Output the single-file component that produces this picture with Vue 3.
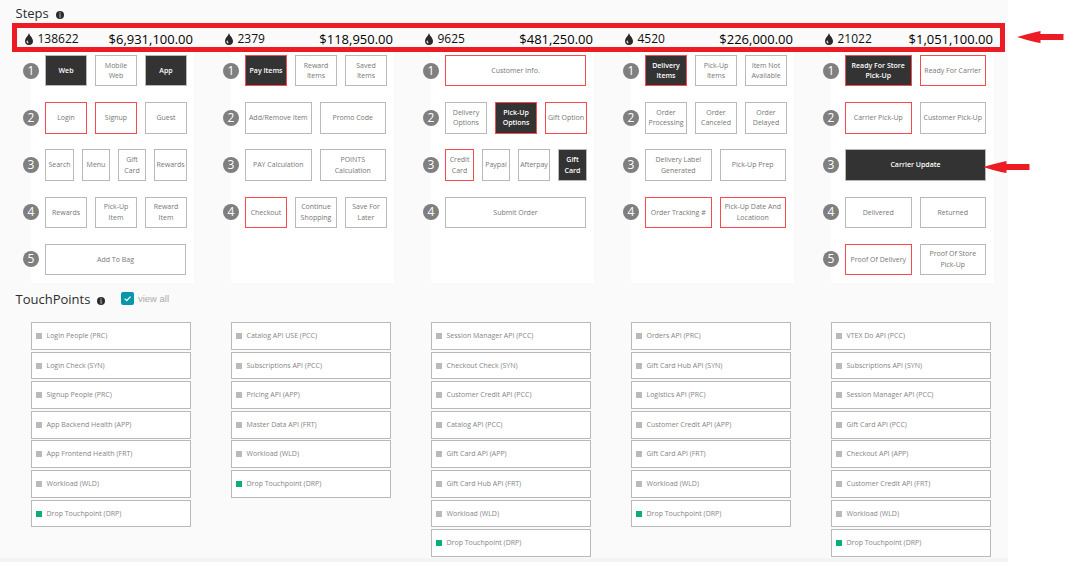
<script setup>
// state: '' plain, 'a' active (dark), 'r' red outline, 'ar' both
const columns = [
  {
    count: '138622',
    amount: '$6,931,100.00',
    rows: [
      [['Web', 'a'], ['Mobile\nWeb'], ['App', 'a']],
      [['Login', 'r'], ['Signup', 'r'], ['Guest']],
      [['Search', '', 29], ['Menu', '', 28], ['Gift Card', '', 28], ['Rewards', '', 33]],
      [['Rewards'], ['Pick-Up Item'], ['Reward Item']],
      [['Add To Bag']],
    ],
    points: ['Login People (PRC)', 'Login Check (SYN)', 'Signup People (PRC)', 'App Backend Health (APP)', 'App Frontend Health (FRT)', 'Workload (WLD)', 'Drop Touchpoint (DRP)'],
  },
  {
    count: '2379',
    amount: '$118,950.00',
    rows: [
      [['Pay Items', 'ar'], ['Reward Items'], ['Saved\nItems']],
      [['Add/Remove Item'], ['Promo Code']],
      [['PAY Calculation'], ['POINTS\nCalculation']],
      [['Checkout', 'r'], ['Continue Shopping'], ['Save For Later']],
    ],
    points: ['Catalog API USE (PCC)', 'Subscriptions API (PCC)', 'Pricing API (APP)', 'Master Data API (FRT)', 'Workload (WLD)', 'Drop Touchpoint (DRP)'],
  },
  {
    count: '9625',
    amount: '$481,250.00',
    rows: [
      [['Customer Info.', 'r']],
      [['Delivery Options'], ['Pick-Up Options', 'ar'], ['Gift Option', 'r']],
      [['Credit Card', 'r', 29], ['Paypal', '', 28], ['Afterpay', '', 32], ['Gift Card', 'a', 29]],
      [['Submit Order']],
    ],
    points: ['Session Manager API (PCC)', 'Checkout Check (SYN)', 'Customer Credit API (PCC)', 'Catalog API (PCC)', 'Gift Card API (APP)', 'Gift Card Hub API (FRT)', 'Workload (WLD)', 'Drop Touchpoint (DRP)'],
  },
  {
    count: '4520',
    amount: '$226,000.00',
    rows: [
      [['Delivery Items', 'ar'], ['Pick-Up Items'], ['Item Not Available']],
      [['Order Processing'], ['Order Canceled'], ['Order Delayed']],
      [['Delivery Label Generated'], ['Pick-Up Prep']],
      [['Order Tracking #', 'r'], ['Pick-Up Date And Locatioon', 'r']],
    ],
    points: ['Orders API (PRC)', 'Gift Card Hub API (SYN)', 'Logistics API (PRC)', 'Customer Credit API (APP)', 'Gift Card API (FRT)', 'Workload (WLD)', 'Drop Touchpoint (DRP)'],
  },
  {
    count: '21022',
    amount: '$1,051,100.00',
    rows: [
      [['Ready For Store Pick-Up', 'ar'], ['Ready For Carrier', 'r']],
      [['Carrier Pick-Up', 'r'], ['Customer Pick-Up']],
      [['Carrier Update', 'a']],
      [['Delivered'], ['Returned']],
      [['Proof Of Delivery', 'r'], ['Proof Of Store\nPick-Up']],
    ],
    points: ['VTEX Do API (PCC)', 'Subscriptions API (SYN)', 'Session Manager API (PCC)', 'Gift Card API (PCC)', 'Checkout API (APP)', 'Customer Credit API (FRT)', 'Workload (WLD)', 'Drop Touchpoint (DRP)'],
  },
]
</script>

<template>
  <div class="stage">
    <main class="page">
      <header class="heading">
        <h2>Steps</h2>
        <svg class="info" viewBox="0 0 8 8"><circle cx="4" cy="4" r="4" fill="#2b2b2b" /><path d="M3.300 1.300h1.400v1.200h-1.400zM3 3.200h1.700v2.700h.6v.7h-2.300v-.7h.5v-2h-.5z" fill="#a5a5a5" /></svg>
      </header>

      <section class="columns totals">
        <div v-for="c in columns" :key="c.count" class="total">
          <svg class="drop" viewBox="0 0 8 12"><path d="M4 0C4.500 2.600 8 5 8 8.100A4 3.900 0 0 1 0 8.100C0 5 3.500 2.600 4 0Z" fill="#292929" /><path d="M1.500 7.900C1.300 9.300 2.200 10.300 3.500 10.200C3.900 9.300 2.700 9 2.600 7.300Z" fill="#d4d4d4" /></svg>
          <span class="count">{{ c.count }}</span>
          <span class="amount">{{ c.amount }}</span>
        </div>
      </section>

      <section class="columns steps">
        <div v-for="c in columns" :key="c.count" class="panel">
          <div v-for="(row, i) in c.rows" :key="i" class="row">
            <span class="num">{{ i + 1 }}</span>
            <div class="cells" :class="{ many: row.length > 2 }">
              <div
                v-for="[label, state = '', width] in row"
                :key="label"
                class="cell"
                :class="{ active: state.includes('a'), alert: state.includes('r') }"
                :style="width ? { flex: `0 0 ${width}px` } : null"
              ><span>{{ label }}</span></div>
            </div>
          </div>
        </div>
      </section>

      <header class="heading touch">
        <h2>TouchPoints</h2>
        <svg class="info" viewBox="0 0 8 8"><circle cx="4" cy="4" r="4" fill="#2b2b2b" /><path d="M3.300 1.300h1.400v1.200h-1.400zM3 3.200h1.700v2.700h.6v.7h-2.300v-.7h.5v-2h-.5z" fill="#a5a5a5" /></svg>
        <svg class="check" viewBox="0 0 13 13"><rect width="13" height="13" rx="2" fill="#0797a8" /><path d="M3.700 6.600l2 2 3.800-4" fill="none" stroke="#fff" stroke-width="1.300" /></svg>
        <span class="viewall">view all</span>
      </header>

      <section class="columns lists">
        <ul v-for="c in columns" :key="c.count" class="list">
          <li v-for="p in c.points" :key="p"><i :class="{ green: p.startsWith('Drop') }"></i><span>{{ p }}</span></li>
        </ul>
      </section>
    </main>

    <div class="frame"></div>
    <svg class="arrow arrow-top" viewBox="0 0 47 12"><path d="M0 6L10 3.300 19 1 23.500 0V3H46.500V9H23.500V12L19 11.200 10 9Z" fill="#ed1c24" /></svg>
    <svg class="arrow arrow-low" viewBox="0 0 47 12"><path d="M0 6L10 3.300 19 1 23.500 0V3H46.500V9H23.500V12L19 11.200 10 9Z" fill="#ed1c24" /></svg>
  </div>
</template>

<style>
body { background: #fff; }
</style>

<style scoped>
.stage {
  position: relative;
  width: 1081px;
  height: 568px;
  overflow: hidden;
  font-family: "Open Sans", sans-serif;
}
.page {
  box-sizing: border-box;
  width: 1008px;
  height: 562px;
  background: #fafafa;
  border-bottom: 4px solid #f4f4f4;
}
.heading {
  box-sizing: border-box;
  display: flex;
  align-items: center;
  height: 27px;
  padding: 0 0 2px 15.500px;
}
h2 {
  margin: 0;
  font-size: 13px;
  line-height: 18px;
  font-weight: 400;
  color: #2d2d2d;
}
.info { width: 8px; height: 8px; margin: 5px 0 0 7.500px; }
.columns {
  display: grid;
  grid-template-columns: repeat(5, 200px);
}
.totals { height: 25px; width: 1008px; }
.total {
  display: flex;
  align-items: center;
  width: 168px;
  height: 23px;
  padding-left: 25px;
  color: #111;
  line-height: 18px;
}
.drop { width: 8px; height: 12px; margin-top: 1px; }
.count { margin-left: 4.500px; font-size: 12px; }
.amount { margin-left: auto; font-size: 13px; color: #000; }
.steps { height: 231px; padding-left: 31px; width: 977px; }
.panel {
  box-sizing: border-box;
  width: 163px;
  height: 231px;
  padding-top: 3px;
  background: #fff;
}
.row {
  display: flex;
  align-items: center;
  height: 31.400px;
  margin: 0 0 15.800px -8px;
}
.num {
  flex: none;
  width: 16px;
  height: 16px;
  border-radius: 50%;
  background: #7f7f7f;
  color: #fff;
  font-size: 12px;
  line-height: 16px;
  text-align: center;
}
.cells {
  display: flex;
  gap: 8px;
  width: 141px;
  height: 100%;
  margin-left: 6px;
}
.cells.many { width: 142px; }
.cell {
  box-sizing: border-box;
  display: flex;
  flex: 1 1 0;
  min-width: 0;
  align-items: center;
  justify-content: center;
  padding-top: 1px;
  border: 1px solid #b9b9b9;
  background: #fff;
  color: #777;
  font-size: 7px;
  line-height: 10.500px;
  text-align: center;
  white-space: pre-line;
}
.cell.active { background: #333; color: #fff; font-weight: 600; }
.cell.alert { border-color: #f8494d; }
.touch { height: 36px; padding-bottom: 4px; }
.touch .info { margin-left: 7px; margin-top: 3px; }
.check { width: 13px; height: 13px; margin: -1px 0 0 15.500px; }
.viewall {
  margin: -2px 0 0 4px;
  font: 9.500px "Liberation Sans", sans-serif;
  color: #aaa;
}
.lists { padding: 3.100px 0 0 31px; }
.list { width: 160px; margin: 0; padding: 0; list-style: none; }
.list li {
  box-sizing: border-box;
  display: flex;
  align-items: center;
  height: 27.800px;
  margin-bottom: 1.800px;
  padding-left: 4px;
  border: 1px solid #b9b9b9;
  background: #fff;
  color: #858585;
  font-size: 7px;
  line-height: 10px;
}
.list i { width: 6px; height: 6px; margin-right: 4.500px; background: #bababa; }
.list i.green { background: #0cae75; }
.frame {
  position: absolute;
  box-sizing: border-box;
  left: 12px;
  top: 23px;
  width: 993px;
  height: 29px;
  border: 5px solid #ed1c24;
}
.arrow { position: absolute; width: 47px; height: 12px; }
.arrow-top { left: 1016.500px; top: 31px; }
.arrow-low { left: 982.500px; top: 161px; }
</style>
